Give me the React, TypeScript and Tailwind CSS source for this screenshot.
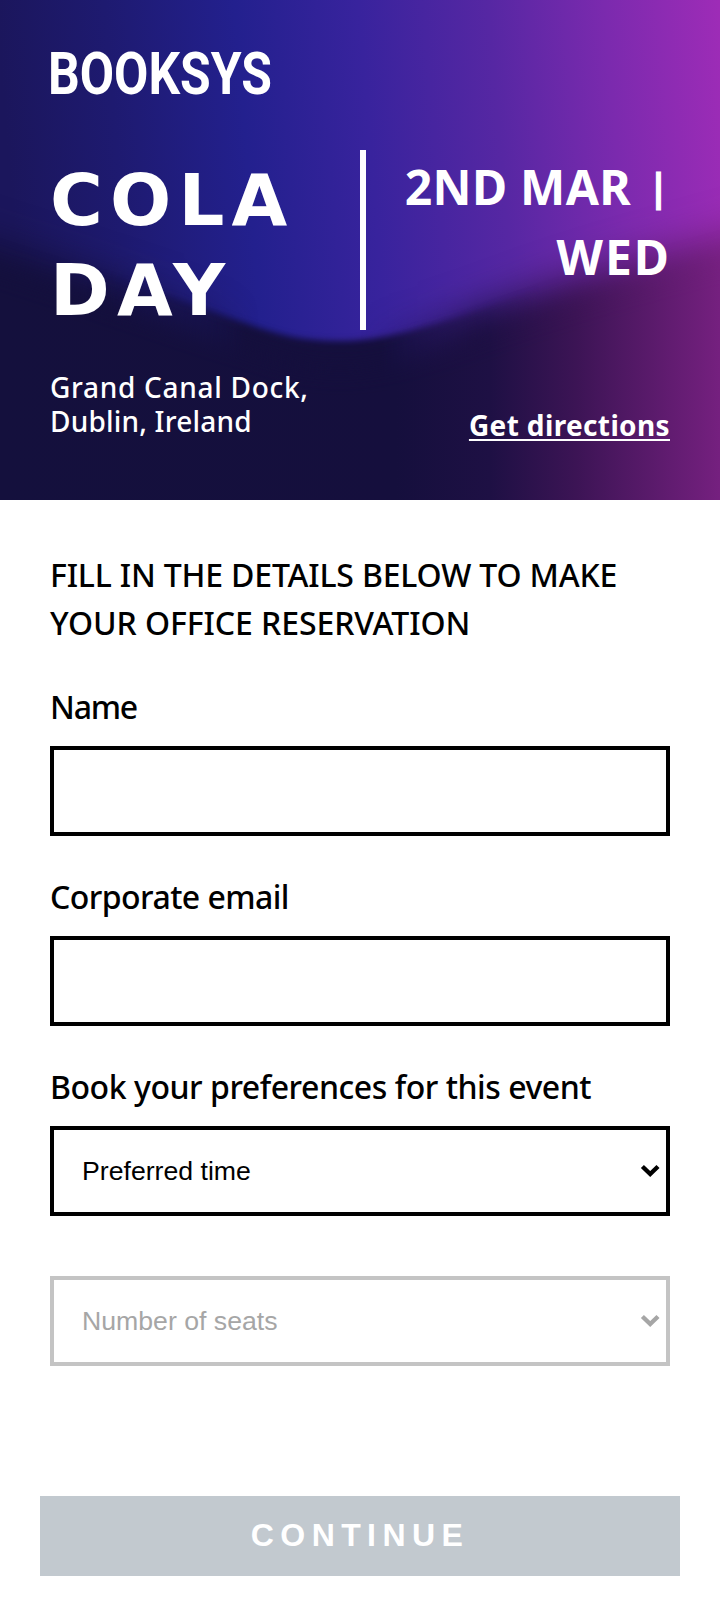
import React from "react";

function HeroArtwork() {
  return (
    <svg className="absolute inset-0 h-full w-full" viewBox="0 0 720 500" preserveAspectRatio="none" aria-hidden="true">
      <defs>
        <linearGradient id="glow" gradientUnits="userSpaceOnUse" x1="0" y1="60" x2="720" y2="0">
          <stop offset="0" stopColor="#1b165c" />
          <stop offset="0.15" stopColor="#1e1a70" />
          <stop offset="0.33" stopColor="#23208e" />
          <stop offset="0.5" stopColor="#38239d" />
          <stop offset="0.68" stopColor="#5627a3" />
          <stop offset="0.84" stopColor="#7b2aae" />
          <stop offset="1" stopColor="#9e2cb7" />
        </linearGradient>
        <linearGradient id="night" gradientUnits="userSpaceOnUse" x1="0" y1="0" x2="720" y2="0">
          <stop offset="0" stopColor="#14103d" />
          <stop offset="0.55" stopColor="#150f3d" />
          <stop offset="0.68" stopColor="#1e1044" />
          <stop offset="0.8" stopColor="#3c1455" />
          <stop offset="1" stopColor="#75207f" />
        </linearGradient>
        <linearGradient id="centre" x1="0" y1="0" x2="1" y2="0">
          <stop offset="0" stopColor="#000" />
          <stop offset="0.12" stopColor="#000" />
          <stop offset="0.34" stopColor="#fff" />
          <stop offset="0.53" stopColor="#fff" />
          <stop offset="0.75" stopColor="#000" />
        </linearGradient>
        <linearGradient id="sides" x1="0" y1="0" x2="1" y2="0">
          <stop offset="0" stopColor="#fff" />
          <stop offset="0.15" stopColor="#fff" />
          <stop offset="0.36" stopColor="#000" />
          <stop offset="0.5" stopColor="#000" />
          <stop offset="0.66" stopColor="#fff" />
        </linearGradient>
        <filter id="soft" x="-20%" y="-20%" width="140%" height="140%">
          <feGaussianBlur stdDeviation="19" />
        </filter>
        <filter id="medium" x="-20%" y="-20%" width="140%" height="140%">
          <feGaussianBlur stdDeviation="12" />
        </filter>
        <filter id="crisp">
          <feGaussianBlur stdDeviation="3" />
        </filter>
        <mask id="centreMask">
          <rect width="720" height="500" fill="url(#centre)" />
        </mask>
        <mask id="sidesMask">
          <rect width="720" height="500" fill="url(#sides)" />
        </mask>
        <mask id="softShape">
          <path d="M-80 215L-20 238C90 272 180 302 230 320S300 343 340 343S420 333 510 300S650 255 740 230L800 212V620H-80Z" fill="#fff" filter="url(#soft)" />
        </mask>
        <mask id="mediumShape">
          <path d="M-80 240L-20 263C90 297 180 330 230 345S300 370 340 370S420 358 510 325S650 280 740 255L800 237V620H-80Z" fill="#fff" filter="url(#medium)" />
        </mask>
        <mask id="crispShape">
          <path d="M-80 215L-20 238C90 270 180 300 230 318S300 341 340 341S420 331 510 300S650 255 740 230L800 212V620H-80Z" fill="#fff" filter="url(#crisp)" />
        </mask>
      </defs>
      <rect width="720" height="500" fill="url(#glow)" />
      <g mask="url(#sidesMask)">
        <rect width="720" height="500" fill="url(#night)" mask="url(#softShape)" />
      </g>
      <g mask="url(#centreMask)">
        <rect width="720" height="500" fill="url(#night)" mask="url(#crispShape)" />
      </g>
      <rect width="720" height="500" fill="url(#night)" mask="url(#mediumShape)" />
    </svg>
  );
}

function Hero() {
  return (
    <header className="relative h-[500px] overflow-hidden text-white">
      <HeroArtwork />
      <div className="relative flex h-full flex-col px-[50px] pt-[39px]">
        <div className="-ml-[2px] h-[70px] w-[222px] origin-left scale-x-[0.83] whitespace-nowrap font-['Roboto',sans-serif] text-[60px] leading-[70px] font-bold">BOOKSYS</div>
        <div className="mt-[41px] flex h-[180px] justify-between">
          <h1 className="w-[310px] pt-[5px] font-['DejaVu_Sans',sans-serif] text-[72px] leading-[90px] font-bold tracking-[7.2px]">COLA DAY</h1>
          <div className="w-[6px] shrink-0 bg-white" />
          <div className="w-[304px] pt-[2px] text-[48px] leading-[70px] font-bold">
            <div className="flex justify-end">
              <span className="tracking-[0.3px] whitespace-pre">2ND MAR</span>
              <span className="-mt-[1px] ml-[13px] w-[26px] pl-[3px] text-center text-[38px] [-webkit-text-stroke:1px_white]">|</span>
            </div>
            <div className="-mr-[1px] text-right tracking-[2px]">WED</div>
          </div>
        </div>
        <div className="mt-[40px] flex justify-between">
          <p className="w-[300px] text-[28px] leading-[34px] font-medium">
            <span className="block tracking-[0.7px]">Grand Canal Dock,</span>
            <span className="block tracking-[0.2px]">Dublin, Ireland</span>
          </p>
          <a className="mt-[38px] self-start text-[28px] leading-[34px] font-bold tracking-[0.37px] underline decoration-2 underline-offset-[3px]">Get directions</a>
        </div>
      </div>
    </header>
  );
}

function Chevron() {
  return (
    <svg className="h-[14px] w-[20px]" viewBox="0 0 20 14" fill="none" stroke="currentColor" strokeWidth="4.4">
      <path d="M2.4 2.5 10.2 10 18 2.5" />
    </svg>
  );
}

function TextField({ label, tracking }: { label: string; tracking: string }) {
  return (
    <label className="mb-[36px] block">
      <span className={"mb-[15px] block pt-px text-[32px] leading-[48px] font-medium " + tracking}>{label}</span>
      <input className="block h-[90px] w-full border-4 border-black bg-white px-7" />
    </label>
  );
}

export default function App() {
  return (
    <main className="h-[1616px] w-[720px] overflow-hidden bg-white font-['Noto_Sans',sans-serif] text-black">
      <Hero />
      <form className="flex flex-col px-[50px] pt-[51px]">
        <h2 className="text-[32px] leading-[48px] font-medium">
          <span className="block tracking-[-0.18px]">FILL IN THE DETAILS BELOW TO MAKE</span>
          <span className="block tracking-[-0.08px]">YOUR OFFICE RESERVATION</span>
        </h2>
        <div className="mt-[35px]">
          <TextField label="Name" tracking="tracking-[-1.2px]" />
          <TextField label="Corporate email" tracking="tracking-[-0.55px]" />
          <p className="mb-[15px] pt-px text-[32px] leading-[48px] font-medium tracking-[-0.46px]">Book your preferences for this event</p>
        </div>
        <button type="button" className="flex h-[90px] items-center justify-between border-4 border-black pr-[6px] pl-[28px] font-['Liberation_Sans',sans-serif] text-[26.67px]">
          Preferred time
          <Chevron />
        </button>
        <button type="button" disabled className="mt-[60px] flex h-[90px] items-center justify-between border-4 border-[#c4c4c4] pr-[6px] pl-[28px] font-['Liberation_Sans',sans-serif] text-[26.67px] text-[#a6a6a6]">
          Number of seats
          <Chevron />
        </button>
        <button type="button" disabled className="-mx-[10px] mt-[130px] h-[80px] bg-[#c2c9cf] pb-[3px] font-['Liberation_Sans',sans-serif] text-[32px] font-bold tracking-[6.4px] text-white">CONTINUE</button>
      </form>
    </main>
  );
}
